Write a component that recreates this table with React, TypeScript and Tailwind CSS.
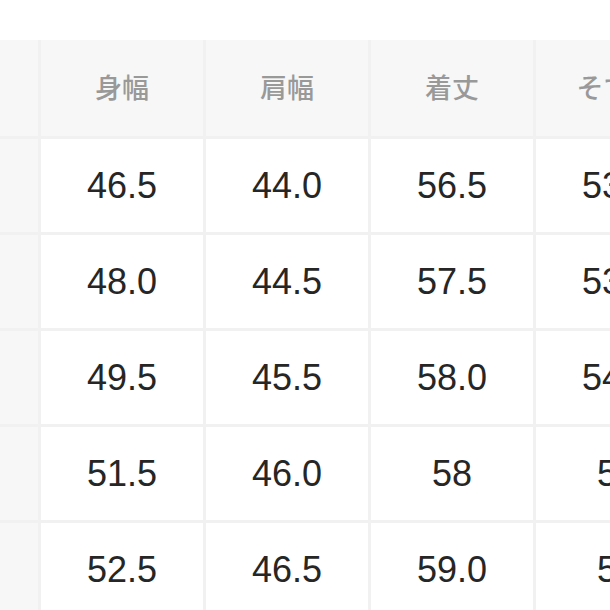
import { Fragment } from 'react';

const headers = ['身幅', '肩幅', '着丈', 'そで丈'];

const rows = [
  ['46.5', '44.0', '56.5', '53.0'],
  ['48.0', '44.5', '57.5', '53.5'],
  ['49.5', '45.5', '58.0', '54.0'],
  ['51.5', '46.0', '58', '55'],
  ['52.5', '46.5', '59.0', '55'],
];

export default function App() {
  return (
    <div className="h-[610px] w-[610px] overflow-hidden bg-white pt-[40px]">
      <div className="grid w-max grid-cols-[38px_162px_162px_162px_162px] grid-rows-[96px_93px_93px_93px_93px_93px] gap-[3px] bg-[#f1f1f1]">
        <div className="bg-[#f7f7f7]" />
        {headers.map((h) => (
          <div
            key={h}
            className="flex items-center justify-center pb-[2px] bg-[#f7f7f7] font-['Noto_Sans_CJK_JP',sans-serif] text-[27px] font-medium text-[#999999]"
          >
            {h}
          </div>
        ))}
        {rows.map((row, i) => (
          <Fragment key={i}>
            <div className="bg-[#f7f7f7]" />
            {row.map((v, j) => (
              <div
                key={j}
                className="flex items-center justify-center bg-white font-['Liberation_Sans',sans-serif] text-[36px] text-[#262626]"
              >
                {v}
              </div>
            ))}
          </Fragment>
        ))}
      </div>
    </div>
  );
}
